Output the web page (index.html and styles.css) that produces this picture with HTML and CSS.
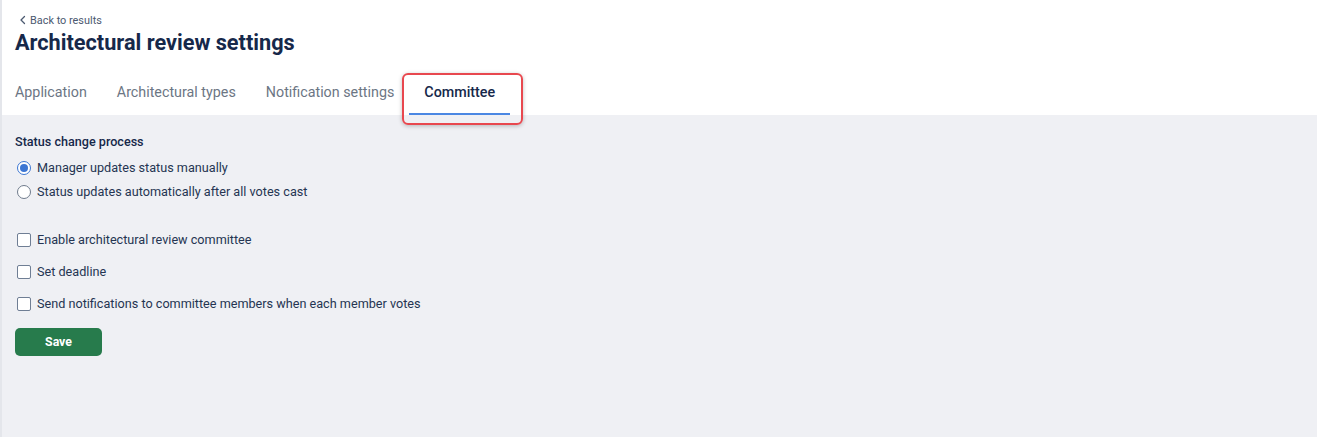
FILE: index.html
```html
<!DOCTYPE html>
<html lang="en">
<head>
<meta charset="utf-8">
<title>Architectural review settings</title>
<link rel="stylesheet" href="styles.css">
</head>
<body>
<div class="page">
  <header class="header">
    <a class="back" href="#">
      <svg class="back-icon" width="8" height="10" viewBox="0 0 8 10"><path d="M5.5 1.5 2 5l3.5 3.5" fill="none" stroke="currentColor" stroke-width="1.3" stroke-linecap="round" stroke-linejoin="round"/></svg>
      <span>Back to results</span>
    </a>
    <h1 class="title">Architectural review settings</h1>
    <nav class="tabs">
      <a class="tab" href="#">Application</a>
      <a class="tab" href="#">Architectural types</a>
      <a class="tab" href="#">Notification settings</a>
      <a class="tab tab-active" href="#">Committee<span class="highlight"></span></a>
    </nav>
  </header>
  <main class="content">
    <div class="section-label">Status change process</div>
    <div class="radios">
      <label class="option"><span class="radio radio-on"></span><span>Manager updates status manually</span></label>
      <label class="option"><span class="radio"></span><span>Status updates automatically after all votes cast</span></label>
    </div>
    <div class="checks">
      <label class="option"><span class="check"></span><span>Enable architectural review committee</span></label>
      <label class="option"><span class="check"></span><span>Set deadline</span></label>
      <label class="option"><span class="check"></span><span>Send notifications to committee members when each member votes</span></label>
    </div>
    <button class="save" type="button">Save</button>
  </main>
</div>
</body>
</html>
```
FILE: styles.css
```css
* { box-sizing: border-box; }
html, body { margin: 0; height: 100%; }
body {
  font-family: Roboto, "Liberation Sans", Arial, sans-serif;
  color: #1b2a47;
  background: #eff0f4;
}
.page {
  min-height: 437px;
  border-left: 2px solid #e4e6eb;
  display: flex;
  flex-direction: column;
}
.header {
  background: #ffffff;
  padding: 13px 0 0 13px;
  display: flex;
  flex-direction: column;
}
.back {
  display: flex;
  align-items: center;
  gap: 3px;
  font-size: 10.9px;
  color: #4b5970;
  text-decoration: none;
  margin-left: 4px;
  height: 14px;
}
.back-icon { color: #4b5970; }
.title {
  margin: 2px 0 0 0;
  font-size: 21.7px;
  font-weight: 700;
  color: #16284a;
  line-height: 28px;
}
.tabs {
  display: flex;
  margin-left: -15px;
  margin-top: 16px;
}
.tab {
  position: relative;
  padding: 0 15px;
  height: 42px;
  line-height: 38px;
  font-size: 14.3px;
  color: #6c7684;
  text-decoration: none;
}
.tab-active {
  color: #16284a;
  font-weight: 500;
}
.tab-active::after {
  content: "";
  position: absolute;
  left: 0;
  right: 0;
  bottom: 0;
  height: 2px;
  background: #4a87e3;
}
.highlight {
  position: absolute;
  left: -7px;
  right: -13px;
  top: 0;
  bottom: -10px;
  border: 2px solid #e8484f;
  border-radius: 6px;
  box-shadow: 0 1px 4px rgba(0,0,0,0.25);
  pointer-events: none;
}
.content {
  flex: 1;
  padding: 19px 13px 0 13px;
  display: flex;
  flex-direction: column;
  align-items: flex-start;
}
.section-label {
  font-size: 12.6px;
  font-weight: 500;
  color: #16284a;
  line-height: 16px;
}
.radios {
  display: flex;
  flex-direction: column;
  gap: 8px;
  margin-top: 10px;
}
.checks {
  display: flex;
  flex-direction: column;
  gap: 16px;
  margin-top: 32px;
}
.option {
  display: flex;
  align-items: center;
  gap: 6px;
  font-size: 12.65px;
  color: #253552;
  line-height: 16px;
  padding-left: 2px;
}
.radio {
  width: 14px;
  height: 14px;
  border-radius: 50%;
  border: 1.5px solid #6f7b8c;
  display: inline-flex;
  align-items: center;
  justify-content: center;
  background: #fff;
}
.radio-on { border-color: #3c76d3; }
.radio-on::after {
  content: "";
  width: 8px;
  height: 8px;
  border-radius: 50%;
  background: #3c76d3;
}
.check {
  width: 14px;
  height: 14px;
  border: 1.5px solid #6f7e94;
  border-radius: 2px;
  background: #fff;
}
.save {
  margin-top: 16px;
  width: 87px;
  height: 28px;
  border: none;
  border-radius: 5px;
  background: #277b4c;
  color: #fff;
  font-family: Roboto, "Liberation Sans", Arial, sans-serif;
  font-weight: 700;
  font-size: 12.3px;
}
```
